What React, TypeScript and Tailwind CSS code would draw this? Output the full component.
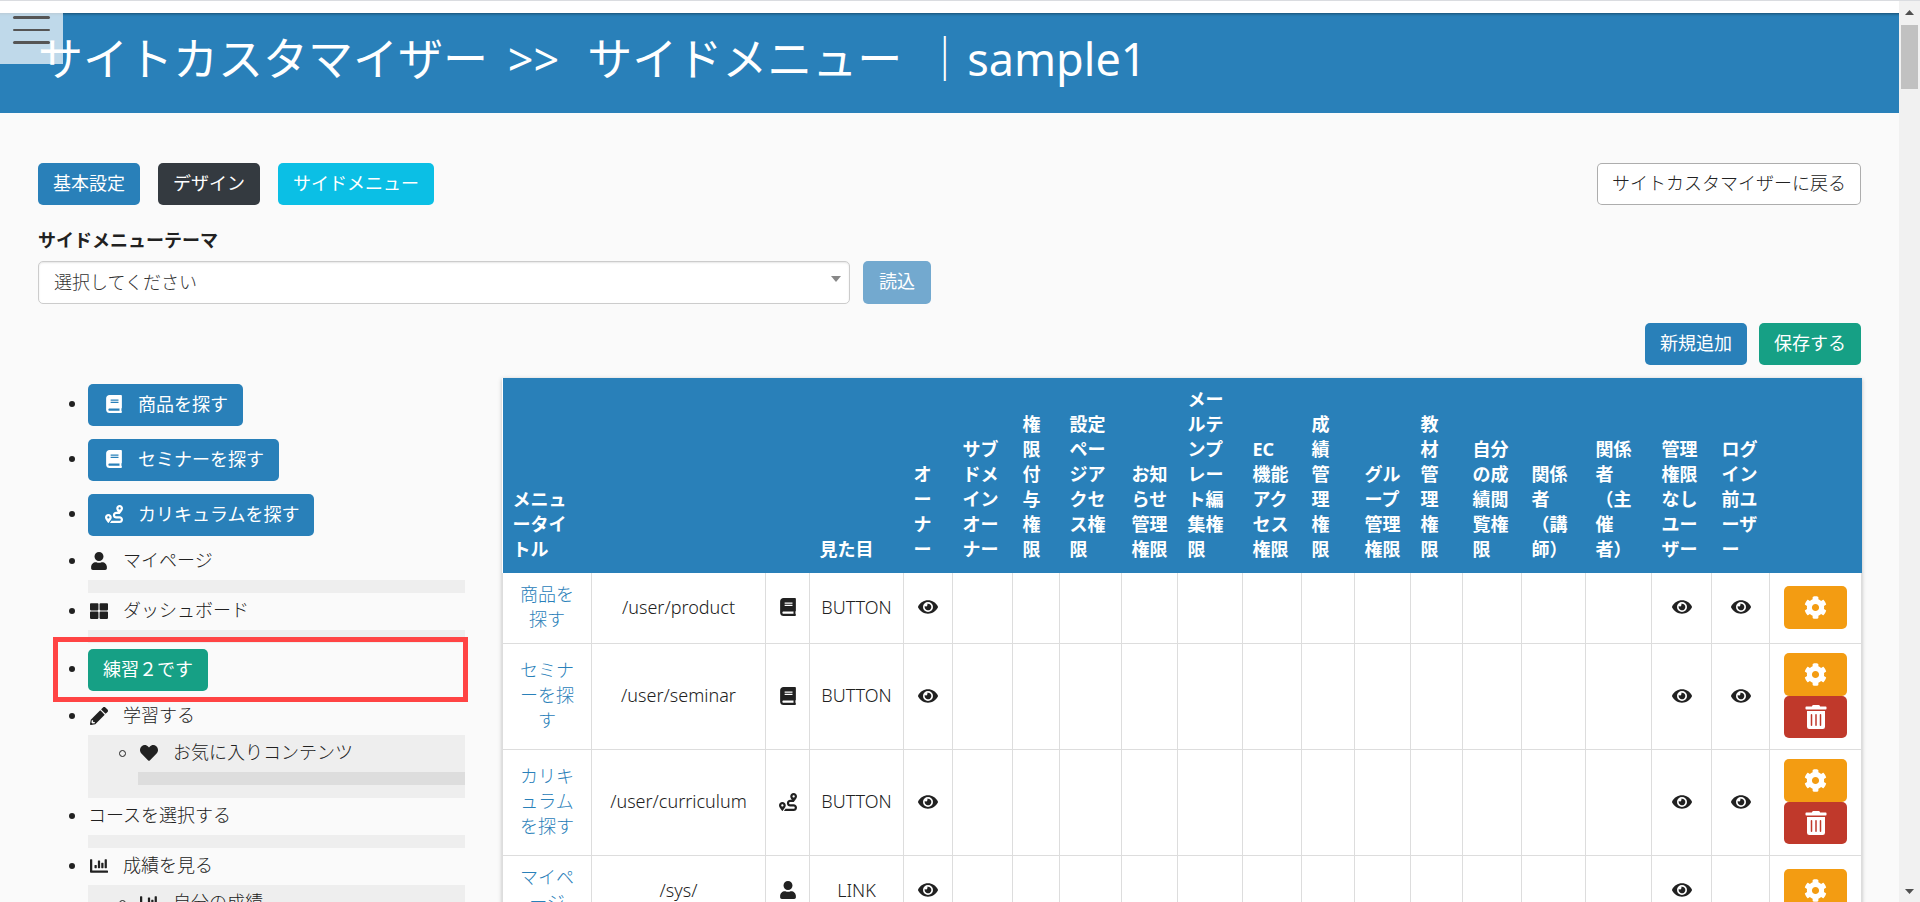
import type { ReactNode } from 'react';
import clsx from 'clsx';
import { FaBook, FaChartBar, FaCog, FaEye, FaHeart, FaRoute, FaThLarge, FaTrashAlt, FaUser } from 'react-icons/fa';

type Icon = (props: { size?: number; className?: string }) => ReactNode;

type MenuItem = {
  title: string;
  icon?: Icon;
  button?: 'blue' | 'green';
  marked?: boolean;
  children?: MenuItem[];
};

// solid pencil, without the highlight line that the icon package draws on it
const Pencil: Icon = ({ size }) => (
  <svg width={size} height={size} viewBox="0 0 512 512" fill="currentColor">
    <path d="M497.9 142.1l-46.1 46.1c-4.7 4.7-12.3 4.7-17 0l-111-111c-4.7-4.7-4.7-12.3 0-17l46.1-46.1c18.7-18.7 49.1-18.7 67.9 0l60.1 60.1c18.8 18.7 18.8 49.1 0 67.9zM284.2 99.8L21.6 362.4.4 483.9c-2.9 16.4 11.4 30.6 27.8 27.8l121.5-21.3 262.6-262.6c4.7-4.7 4.7-12.3 0-17l-111-111c-4.8-4.7-12.4-4.7-17.1 0zM88 424h48v36.3l-64.5 11.3-31.1-31.1L51.7 376H88v48z" />
  </svg>
);

const menuItems: MenuItem[] = [
  { title: '商品を探す', icon: FaBook, button: 'blue' },
  { title: 'セミナーを探す', icon: FaBook, button: 'blue' },
  { title: 'カリキュラムを探す', icon: FaRoute, button: 'blue' },
  { title: 'マイページ', icon: FaUser },
  { title: 'ダッシュボード', icon: FaThLarge },
  { title: '練習２です', button: 'green', marked: true },
  {
    title: '学習する',
    icon: Pencil,
    children: [{ title: 'お気に入りコンテンツ', icon: FaHeart }],
  },
  { title: 'コースを選択する' },
  {
    title: '成績を見る',
    icon: FaChartBar,
    children: [{ title: '自分の成績', icon: FaChartBar }],
  },
];

const columns = [
  { title: 'メニュータイトル', width: 'w-[89px]' },
  { title: '', width: 'w-[174px]' },
  { title: '', width: 'w-[44px]' },
  { title: '見た目', width: 'w-[94px]' },
  { title: 'オーナー', width: 'w-[49px]' },
  { title: 'サブドメインオーナー', width: 'w-[60px]' },
  { title: '権限付与権限', width: 'w-[47px]' },
  { title: '設定ページアクセス権限', width: 'w-[62px]' },
  { title: 'お知らせ管理権限', width: 'w-[56px]' },
  { title: 'メールテンプレート編集権限', width: 'w-[65px]' },
  { title: 'EC 機能アクセス権限', width: 'w-[59px]' },
  { title: '成績管理権限', width: 'w-[53px]' },
  { title: 'グループ管理権限', width: 'w-[56px]' },
  { title: '教材管理権限', width: 'w-[52px]' },
  { title: '自分の成績閲覧権限', width: 'w-[59px]' },
  { title: '関係者（講師）', width: 'w-[64px]' },
  { title: '関係者（主催者）', width: 'w-[66px]' },
  { title: '管理権限なしユーザー', width: 'w-[60px]' },
  { title: 'ログイン前ユーザー', width: 'w-[58px]' },
  { title: '', width: 'w-[92px]' },
];

// permission columns, from オーナー to ログイン前ユーザー
const permissionCount = 15;

const rows = [
  { title: '商品を探す', url: '/user/product', icon: FaBook, look: 'BUTTON', visible: [0, 13, 14], removable: false },
  { title: 'セミナーを探す', url: '/user/seminar', icon: FaBook, look: 'BUTTON', visible: [0, 13, 14], removable: true },
  { title: 'カリキュラムを探す', url: '/user/curriculum', icon: FaRoute, look: 'BUTTON', visible: [0, 13, 14], removable: true },
  { title: 'マイページ', url: '/sys/', icon: FaUser, look: 'LINK', visible: [0, 13], removable: false },
];

const Button = ({ className, children }: { className: string; children: ReactNode }) => (
  <button
    type="button"
    className={clsx('flex h-[42px] items-center rounded-[5px] px-[15px] pb-[2px] whitespace-nowrap', className)}
  >
    {children}
  </button>
);

const ItemLabel = ({ item }: { item: MenuItem }) => {
  const Icon = item.icon;
  return (
    <>
      {Icon && (
        <span className="mr-[13px] flex w-[22px] justify-center">
          <Icon size={18} />
        </span>
      )}
      {item.title}
    </>
  );
};

const MenuList = ({ items, nested }: { items: MenuItem[]; nested?: boolean }) => (
  <ul className={clsx('pl-[50px]', nested && 'bg-[#eee] pt-[6px] pb-[7px]')}>
    {items.map((item) => (
      <li key={item.title} className="relative">
        <span
          className={clsx(
            'absolute -left-[19px] rounded-full',
            item.button ? 'top-[17px]' : 'top-[9px]',
            nested ? 'size-[7px] border border-[#212121]' : 'size-[6px] bg-[#212121]',
          )}
        />
        {item.button ? (
          <div className="pb-[13px]">
            <Button className={clsx('font-normal text-white', item.button === 'blue' ? 'bg-[#2980b9]' : 'bg-[#16a085]')}>
              <ItemLabel item={item} />
            </Button>
          </div>
        ) : (
          <div className="pb-[6px]">
            <a href="#" className="flex h-[25px] items-center pb-[2px]">
              <ItemLabel item={item} />
            </a>
            <div className="mt-[6px]">
              {item.children ? (
                <MenuList items={item.children} nested />
              ) : (
                <div className={clsx('h-[13px]', nested ? 'bg-[#ddd]' : 'bg-[#eee]')} />
              )}
            </div>
          </div>
        )}
        {item.marked && (
          <div className="pointer-events-none absolute -top-[12px] -right-[3px] bottom-[2px] -left-[35px] border-[5px] border-[#ff4444]" />
        )}
      </li>
    ))}
  </ul>
);

const PermissionTable = () => (
  <table className="w-full table-fixed border-collapse bg-white shadow-[0_1px_4px_rgba(0,0,0,0.25)]">
    <colgroup>
      {columns.map((column, i) => (
        <col key={i} className={column.width} />
      ))}
    </colgroup>
    <thead>
      <tr className="bg-[#2980b9] text-left align-bottom font-bold text-white [text-spacing-trim:space-all]">
        {columns.map((column, i) => (
          <th key={i} scope="col" className="pt-[9px] pr-[8px] pb-[11px] pl-[10px]">
            {column.title}
          </th>
        ))}
      </tr>
    </thead>
    <tbody>
      {rows.map((row) => (
        <tr
          key={row.title}
          className="text-center [&>td]:border [&>td]:border-t-0 [&>td]:border-[#ddd] [&>td]:pt-[9px] [&>td]:pb-[11px]"
        >
          <td className="px-[11px]">
            <a href="#" className="text-[#2980b9]">
              {row.title}
            </a>
          </td>
          <td>{row.url}</td>
          <td>
            <row.icon size={18} className="mx-auto" />
          </td>
          <td>{row.look}</td>
          {Array.from({ length: permissionCount }, (_, i) => (
            <td key={i}>{row.visible.includes(i) && <FaEye size={20} className="mx-auto" />}</td>
          ))}
          <td>
            <div className="mx-auto w-[63px] text-white">
              <button
                type="button"
                aria-label="設定"
                className="flex h-[43px] w-full items-center justify-center rounded-[5px] bg-[#f39c12]"
              >
                <FaCog size={23} />
              </button>
              {row.removable && (
                <button
                  type="button"
                  aria-label="削除"
                  className="flex h-[42px] w-full items-center justify-center rounded-[5px] bg-[#c0392b]"
                >
                  <FaTrashAlt size={24} />
                </button>
              )}
            </div>
          </td>
        </tr>
      ))}
    </tbody>
  </table>
);

const ScrollTrack = () => (
  <div className="flex w-[21px] shrink-0 flex-col items-center bg-[#f1f1f1] pt-[9px] pb-[8px]">
    <svg width="9" height="5" className="fill-[#505050]">
      <path d="M4.5 0 9 5H0z" />
    </svg>
    <div className="mt-[10px] h-16 w-[17px] bg-[#c1c1c1]" />
    <svg width="9" height="5" className="mt-auto fill-[#505050]">
      <path d="M0 0h9L4.5 5z" />
    </svg>
  </div>
);

const App = () => {
  return (
    <div className="flex h-screen overflow-hidden border-t border-[#dadce0] bg-[#fafafa] font-['Noto_Sans','Noto_Sans_CJK_JP',sans-serif] text-[18px] leading-[25px] font-light text-[#212121]">
      <div className="min-w-0 flex-1">
        <div className="h-3 bg-white" />
        <header className="relative h-[100px] bg-[#2980b9] px-[38px] pt-4 text-white shadow-[inset_0_4px_3px_-3px_rgba(0,0,0,0.4)]">
          <h1 className="text-[45px] leading-[60px] font-normal whitespace-pre">
            サイトカスタマイザー <span className="mr-7 ml-2">&gt;&gt;</span>サイドメニュー
            <span className="ml-5">｜</span>sample1
          </h1>
          <button
            type="button"
            aria-label="メニュー"
            className="absolute top-0 left-0 flex h-[51px] w-[63px] flex-col gap-[10px] bg-white/70 pt-[3px] pl-[13px]"
          >
            <span className="h-[3px] w-[37px] rounded-sm bg-[#555]" />
            <span className="h-[2px] w-[37px] rounded-sm bg-[#555]" />
            <span className="h-[3px] w-[37px] rounded-sm bg-[#555]" />
          </button>
        </header>

        <main className="px-[38px] pt-[50px]">
          <div className="flex justify-between">
            <div className="flex gap-[18px] font-normal text-white">
              <Button className="bg-[#2980b9]">基本設定</Button>
              <Button className="bg-[#343a40]">デザイン</Button>
              <Button className="bg-[#0bbfe5]">サイドメニュー</Button>
            </div>
            <Button className="bg-white text-[#212121] inset-ring inset-ring-[#adadad]">
              サイトカスタマイザーに戻る
            </Button>
          </div>

          <label htmlFor="theme" className="mt-[23px] mb-2 block w-fit font-bold">
            サイドメニューテーマ
          </label>
          <div className="flex gap-[13px]">
            <div className="relative w-[812px]">
              <select
                id="theme"
                className="h-[43px] w-full appearance-none rounded-[5px] border border-[#ccc] bg-white px-[15px] text-[#333] shadow-[inset_0_1px_2px_rgba(0,0,0,0.1)]"
              >
                <option>選択してください</option>
              </select>
              <svg width="10" height="6" className="pointer-events-none absolute top-[15px] right-[9px] fill-[#888]">
                <path d="M0 0h10L5 6z" />
              </svg>
            </div>
            <button
              type="button"
              disabled
              className="h-[43px] rounded-[5px] bg-[#73a9cf] px-4 pb-[2px] font-normal text-white"
            >
              読込
            </button>
          </div>

          <div className="mt-[19px] flex justify-end gap-3 font-normal text-white">
            <Button className="bg-[#2980b9]">新規追加</Button>
            <Button className="bg-[#16a085]">保存する</Button>
          </div>

          <div className="mt-[13px] flex items-start gap-[37px]">
            <nav className="w-[427px] shrink-0 pt-[6px]">
              <MenuList items={menuItems} />
            </nav>
            <div className="min-w-0 flex-1 pr-px">
              <PermissionTable />
            </div>
          </div>
        </main>
      </div>
      <ScrollTrack />
    </div>
  );
};

export default App;
